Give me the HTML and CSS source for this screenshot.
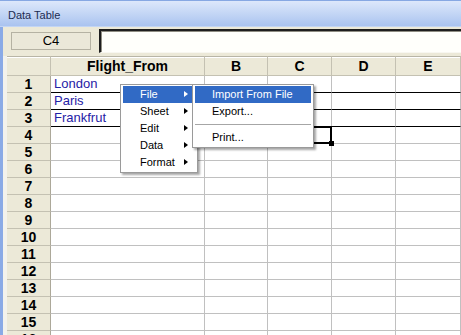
FILE: index.html
```html
<!DOCTYPE html>
<html lang="en">
<head>
    <meta charset="UTF-8">
    <title>Data Table</title>
    <link rel="stylesheet" href="styles.css">
</head>
<body>
<div class="window">
    <div class="titlebar">Data Table</div>
    <div class="frame">
        <div class="formula-bar">
            <div class="cell-ref">C4</div>
            <div class="formula-input"></div>
        </div>
        <div class="sheet-wrap">
            <div class="sheet">
                <div class="corner"></div>
                <div class="col-head">Flight_From</div><div class="col-head">B</div><div class="col-head">C</div><div class="col-head">D</div><div class="col-head">E</div>

                <div class="row-head">1</div>
                <div class="cell linked">London</div><div class="cell linked"></div><div class="cell linked"></div><div class="cell linked"></div><div class="cell linked"></div>
                <div class="row-head">2</div>
                <div class="cell linked">Paris</div><div class="cell linked"></div><div class="cell linked"></div><div class="cell linked"></div><div class="cell linked"></div>
                <div class="row-head">3</div>
                <div class="cell linked">Frankfrut</div><div class="cell linked"></div><div class="cell linked"></div><div class="cell linked"></div><div class="cell linked"></div>
                <div class="row-head">4</div>
                <div class="cell"></div><div class="cell"></div><div class="cell selected"></div><div class="cell"></div><div class="cell"></div>
                <div class="row-head">5</div>
                <div class="cell"></div><div class="cell"></div><div class="cell"></div><div class="cell"></div><div class="cell"></div>
                <div class="row-head">6</div>
                <div class="cell"></div><div class="cell"></div><div class="cell"></div><div class="cell"></div><div class="cell"></div>
                <div class="row-head">7</div>
                <div class="cell"></div><div class="cell"></div><div class="cell"></div><div class="cell"></div><div class="cell"></div>
                <div class="row-head">8</div>
                <div class="cell"></div><div class="cell"></div><div class="cell"></div><div class="cell"></div><div class="cell"></div>
                <div class="row-head">9</div>
                <div class="cell"></div><div class="cell"></div><div class="cell"></div><div class="cell"></div><div class="cell"></div>
                <div class="row-head">10</div>
                <div class="cell"></div><div class="cell"></div><div class="cell"></div><div class="cell"></div><div class="cell"></div>
                <div class="row-head">11</div>
                <div class="cell"></div><div class="cell"></div><div class="cell"></div><div class="cell"></div><div class="cell"></div>
                <div class="row-head">12</div>
                <div class="cell"></div><div class="cell"></div><div class="cell"></div><div class="cell"></div><div class="cell"></div>
                <div class="row-head">13</div>
                <div class="cell"></div><div class="cell"></div><div class="cell"></div><div class="cell"></div><div class="cell"></div>
                <div class="row-head">14</div>
                <div class="cell"></div><div class="cell"></div><div class="cell"></div><div class="cell"></div><div class="cell"></div>
                <div class="row-head">15</div>
                <div class="cell"></div><div class="cell"></div><div class="cell"></div><div class="cell"></div><div class="cell"></div>
                <div class="row-head">16</div>
                <div class="cell"></div><div class="cell"></div><div class="cell"></div><div class="cell"></div><div class="cell"></div>
            </div>
        </div>
    </div>

    <!-- context menu opened on the sheet -->
    <div class="menu main-menu">
        <div class="menu-item has-sub active">File</div>
        <div class="menu-item has-sub">Sheet</div>
        <div class="menu-item has-sub">Edit</div>
        <div class="menu-item has-sub">Data</div>
        <div class="menu-item has-sub">Format</div>
    </div>
    <div class="menu sub-menu">
        <div class="menu-item active">Import From File</div>
        <div class="menu-item">Export...</div>
        <div class="menu-sep"></div>
        <div class="menu-item">Print...</div>
    </div>
</div>
</body>
</html>
```

FILE: styles.css
```css
html, body {
    margin: 0;
    height: 335px;
    overflow: hidden;
}
body {
    font-family: 'Liberation Sans', Arial, sans-serif;
    background: #ece9d8;
}
.window {
    position: relative;
    width: 461px;
    height: 335px;
    overflow: hidden;
}
.titlebar {
    height: 26px;
    padding-left: 8px;
    line-height: 29px;
    font-size: 11px;
    color: #1c2c52;
    background: linear-gradient(#dde8fb, #a8c2ef);
    border-top: 1px solid #87a8e3;
    box-sizing: border-box;
    height: 27px;
    box-shadow: inset 0 -1px #c3d5f4;
}
.frame {
    border-left: 3px solid #8aaae6;
    background: #ece9d8;
}
.formula-bar {
    display: flex;
    align-items: flex-start;
    height: 29px;
    box-sizing: border-box;
}
.cell-ref {
    margin: 5px 0 0 8px;
    width: 80px;
    height: 18px;
    box-sizing: border-box;
    border: 1px solid #b5b2a3;
    background: #ebe8d9;
    font-size: 13px;
    line-height: 16px;
    text-align: center;
    color: #000;
}
.formula-input {
    flex: 1;
    margin: 2px 0 0 8px;
    height: 24px;
    box-sizing: border-box;
    background: #fffffb;
    border-top: 2px solid #1e1e1e;
    border-left: 2px solid #1e1e1e;
    border-bottom: 1px solid #f8f7f0;
    box-shadow: inset 1px 1px #8f8d82;
}
.sheet-wrap {
    padding-left: 4px;
    background: #f3f2ec;
}
.sheet {
    display: grid;
    grid-template-columns: 44px 154px 63px 64px 64px 65px;
    grid-template-rows: 20px;
    grid-auto-rows: 17px;
    background: #fff;
}
.sheet > div {
    box-sizing: border-box;
}
.corner, .col-head, .row-head {
    background: #ece9d8;
    border-right: 1px solid #c4c1b2;
    border-bottom: 1px solid #c4c1b2;
    font-weight: bold;
    font-size: 14px;
    color: #000;
    text-align: center;
}
.corner, .col-head {
    box-shadow: inset 0 1px #fff;
    border-top: 1px solid #b8b5a6;
    line-height: 18px;
}
.row-head {
    line-height: 17px;
    border-right-color: #aca899;
}
.cell {
    position: relative;
    border-right: 1px solid #c0c0c0;
    border-bottom: 1px solid #c0c0c0;
    font-size: 13px;
    line-height: 16px;
    padding-left: 3px;
    color: #1f22a6;
}
.cell.linked {
    border-bottom-color: #000;
}
.cell.selected::after {
    content: "";
    position: absolute;
    top: -1px;
    left: -1px;
    right: -1px;
    bottom: -1px;
    border: 2px solid #000;
}
.cell.selected::before {
    content: "";
    position: absolute;
    right: -3px;
    bottom: -3px;
    width: 5px;
    height: 5px;
    background: #000;
    z-index: 2;
}
.menu {
    position: absolute;
    top: 84px;
    background: #fff;
    border: 1px solid #9a9a9a;
    padding: 1px 2px;
    box-shadow: 2px 2px 2px rgba(0, 0, 0, 0.35);
    font-size: 11px;
    color: #000;
    z-index: 5;
}
.main-menu {
    left: 120px;
    width: 72px;
}
.sub-menu {
    left: 192px;
    width: 116px;
}
.menu-item {
    position: relative;
    height: 17px;
    line-height: 17px;
    padding-left: 17px;
}
.menu-item.active {
    background: #316ac5;
    color: #fff;
}
.has-sub::after {
    content: "";
    position: absolute;
    right: 7px;
    top: 5px;
    border-top: 3.5px solid transparent;
    border-bottom: 3.5px solid transparent;
    border-left: 4px solid #000;
}
.has-sub.active::after {
    border-left-color: #fff;
}
.menu-sep {
    height: 1px;
    margin: 4px 0;
    background: #a6a6a6;
}
```
